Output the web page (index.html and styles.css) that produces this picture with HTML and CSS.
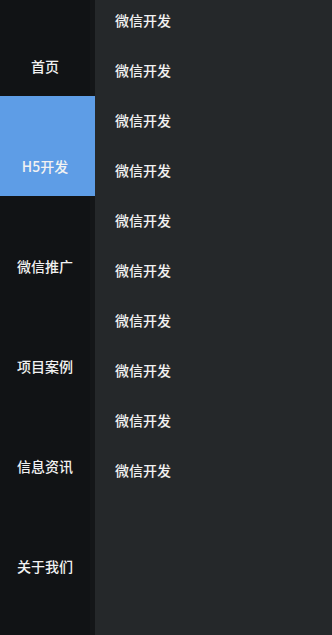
FILE: index.html
```html
<!DOCTYPE html>
<html lang="zh">
<head>
<meta charset="utf-8">
<link rel="stylesheet" href="styles.css">
</head>
<body>
<div class="page">
  <nav class="side">
    <ul class="side-list">
      <li class="side-item">首页</li>
      <li class="side-item active">H5开发</li>
      <li class="side-item">微信推广</li>
      <li class="side-item">项目案例</li>
      <li class="side-item">信息资讯</li>
      <li class="side-item">关于我们</li>
    </ul>
  </nav>
  <main class="content">
    <ul class="sub-list">
      <li class="sub-item">微信开发</li>
      <li class="sub-item">微信开发</li>
      <li class="sub-item">微信开发</li>
      <li class="sub-item">微信开发</li>
      <li class="sub-item">微信开发</li>
      <li class="sub-item">微信开发</li>
      <li class="sub-item">微信开发</li>
      <li class="sub-item">微信开发</li>
      <li class="sub-item">微信开发</li>
      <li class="sub-item">微信开发</li>
    </ul>
  </main>
</div>
</body>
</html>
```
FILE: styles.css
```css
html, body {
  margin: 0;
  padding: 0;
  height: 100%;
  overflow: hidden;
}
body {
  font-family: "Noto Sans CJK SC", "Noto Sans", sans-serif;
  font-size: 14px;
  color: #f2f2f2;
  background: #25282a;
}
.page {
  display: flex;
  height: 635px;
}
.side {
  width: 95px;
  flex: none;
  background: linear-gradient(to right, #111315 0, #111315 90px, #141618 90px, #141618 95px);
  overflow: hidden;
}
.side-list, .sub-list {
  list-style: none;
  margin: 0;
  padding: 0;
}
.side-list {
  margin-top: -4px;
}
.side-item {
  height: 100px;
  box-sizing: border-box;
  display: flex;
  align-items: flex-end;
  justify-content: center;
  padding-bottom: 21px;
  padding-right: 5px;
  line-height: 18px;
  font-weight: 500;
}
.side-item.active {
  background: #5e9de6;
}
.content {
  flex: 1;
  background: #25282a;
  padding-left: 20px;
  overflow: hidden;
}
.sub-list {
  margin-top: -5px;
}
.sub-item {
  height: 50px;
  line-height: 50px;
  font-weight: 500;
}
```
